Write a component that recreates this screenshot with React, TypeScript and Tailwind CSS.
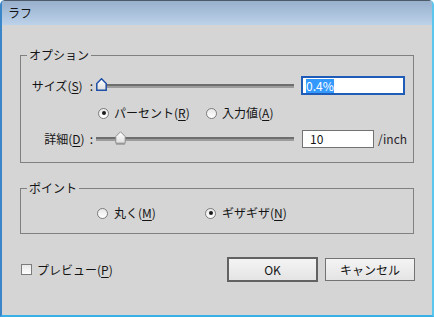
import React from 'react';

const FONT = "font-['Noto_Sans_CJK_JP','Noto_Sans',sans-serif]";

function Radio({ checked }: { checked?: boolean }) {
  return (
    <span className="w-[11px] h-[11px] rounded-full border border-[#7c7c7c] bg-gradient-to-b from-[#e9e9e9] to-[#ffffff] flex items-center justify-center shrink-0">
      {checked && <span className="w-[4px] h-[4px] rounded-full bg-[#1b1b1b]" />}
    </span>
  );
}

function Mn({ k }: { k: string }) {
  return (
    <>
      (<span className="underline underline-offset-2 decoration-1">{k}</span>)
    </>
  );
}

function Thumb({ focused }: { focused?: boolean }) {
  const stroke = focused ? '#1f4fa6' : '#8c8c8c';
  return (
    <svg width="11" height="15" viewBox="0 0 11 15" className="block">
      {!focused && <rect x="1" y="12" width="9" height="2" fill="#a8a8a8" />}
      <defs>
        <linearGradient id={focused ? 'tf' : 'tg'} x1="0" y1="0" x2="0" y2="1">
          <stop offset="0" stopColor="#ffffff" />
          <stop offset="1" stopColor="#dedede" />
        </linearGradient>
      </defs>
      <path
        d="M5.5 0.8 L10.2 5.5 L10.2 12.2 L0.8 12.2 L0.8 5.5 Z"
        fill={`url(#${focused ? 'tf' : 'tg'})`}
        stroke={stroke}
        strokeWidth={focused ? 1.5 : 1}
      />
    </svg>
  );
}

function Slider({ pos, focused }: { pos: number; focused?: boolean }) {
  return (
    <div className="relative w-[200px] h-full flex items-center">
      <div className="w-[198px] h-[4px] border-t-[2px] border-[#6e6e6e] bg-[#9c9c9c]" />
      <div className="absolute top-1/2 -translate-y-[8px]" style={{ left: pos }}>
        <Thumb focused={focused} />
      </div>
    </div>
  );
}

export default function App() {
  return (
    <div className={`w-[434px] h-[317px] flex flex-col bg-[#d5d5d5] border-x-2 border-b-2 border-l-[#3a86c8] border-r-[#5cc6ee] border-b-[#3ab0e8] rounded-t-[5px] overflow-hidden text-[12px] leading-[16px] text-[#141414] ${FONT}`}>
      {/* title */}
      <div className="h-[25px] shrink-0 bg-gradient-to-b from-[#98b0cd] to-[#bcd2ea] flex items-center pl-[6px] border-t border-[#4d5a68]">
        <span>ラフ</span>
      </div>

      <div className="flex flex-col pl-[18px]">
        {/* options */}
        <fieldset className="w-[394px] mt-[22px] border border-[#808080] pb-[14px]">
          <legend className="ml-[6px] px-[2px]">オプション</legend>
          <div className="flex items-center h-[19px] mt-[13px]">
            <div className="w-[75px] flex justify-end pr-[3px] whitespace-nowrap">
              <span>
                サイズ<Mn k="S" />
              </span>
              <span className="ml-[7px]">:</span>
            </div>
            <Slider pos={0} focused />
            <div className="ml-[5px] w-[104px] h-[19px] border-2 border-[#1e5cb8] bg-white flex items-center px-[3px]">
              <span className="bg-[#3399ff] text-white leading-[14px]">0.4%</span>
            </div>
          </div>
          <div className="flex items-center h-[16px] mt-[10px] pl-[77px]">
            <div className="w-[108px] flex items-center gap-[5px]">
              <Radio checked />
              <span>
                パーセント<Mn k="R" />
              </span>
            </div>
            <div className="flex items-center gap-[5px]">
              <Radio />
              <span>
                入力値<Mn k="A" />
              </span>
            </div>
          </div>
          <div className="flex items-center h-[18px] mt-[9px]">
            <div className="w-[75px] flex justify-end pr-[3px] whitespace-nowrap">
              <span>
                詳細<Mn k="D" />
              </span>
              <span className="ml-[5px]">:</span>
            </div>
            <Slider pos={19} />
            <div className="ml-[6px] w-[72px] h-[18px] border border-[#727272] bg-white flex items-center px-[7px]">
              10
            </div>
            <span className="ml-[4px] text-[#2a1f2a]">/inch</span>
          </div>
        </fieldset>

        {/* point */}
        <fieldset className="w-[394px] mt-[17px] border border-[#808080] pb-[12px]">
          <legend className="ml-[6px] px-[2px]">ポイント</legend>
          <div className="flex items-center h-[16px] mt-[9px] pl-[76px]">
            <div className="w-[108px] flex items-center gap-[6px]">
              <Radio />
              <span>
                丸く<Mn k="M" />
              </span>
            </div>
            <div className="flex items-center gap-[6px]">
              <Radio checked />
              <span>
                ギザギザ<Mn k="N" />
              </span>
            </div>
          </div>
        </fieldset>

        {/* bottom */}
        <div className="flex items-center h-[25px] mt-[23px] pr-[17px]">
          <div className="flex items-center gap-[5px] pl-[1px]">
            <span className="w-[11px] h-[11px] border border-[#7c7c7c] bg-gradient-to-b from-[#e9e9e9] to-white" />
            <span>
              プレビュー<Mn k="P" />
            </span>
          </div>
          <div className="ml-auto flex items-center gap-[7px]">
            <button className="w-[91px] h-[25px] border-2 border-[#626262] bg-gradient-to-b from-[#f4f4f4] to-[#e4e4e4] flex items-center justify-center">
              OK
            </button>
            <button className="w-[90px] h-[23px] border border-[#737373] bg-gradient-to-b from-[#f4f4f4] to-[#e4e4e4] flex items-center justify-center">
              キャンセル
            </button>
          </div>
        </div>
      </div>
    </div>
  );
}
